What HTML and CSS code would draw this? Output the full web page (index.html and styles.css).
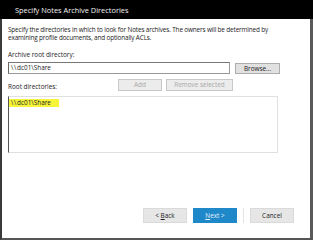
FILE: index.html
```html
<!DOCTYPE html>
<html>
<head>
<meta charset="utf-8">
<link rel="stylesheet" href="styles.css">
</head>
<body>
<div class="window">
  <div class="titlebar">Specify Notes Archive Directories</div>
  <div class="content">
    <p class="desc">Specify the directories in which to look for Notes archives. The owners will be determined by examining profile documents, and optionally ACLs.</p>
    <div class="label label-root">Archive root directory:</div>
    <div class="row">
      <div class="input"><span class="bs">&#92;&#92;</span>dc01&#92;Share</div>
      <div class="btn btn-browse">Browse...</div>
    </div>
    <div class="row row-mid">
      <div class="label">Root directories:</div>
      <div class="btn btn-dis btn-add">Add</div>
      <div class="btn btn-dis btn-remove">Remove selected</div>
    </div>
    <div class="listbox">
      <span class="item"><span class="bs">&#92;&#92;</span>dc01&#92;Share</span>
    </div>
    <div class="footer">
      <div class="btn btn-nav">&lt; <u>B</u>ack</div>
      <div class="btn btn-nav btn-next"><u>N</u>ext &gt;</div>
      <div class="sep"></div>
      <div class="btn btn-nav">Cancel</div>
    </div>
  </div>
</div>
</body>
</html>
```
FILE: styles.css
```css
html, body {
  margin: 0;
  padding: 0;
  background: #fff;
}
.window {
  width: 313px;
  height: 240px;
  box-sizing: border-box;
  border-left: 2px solid #3a3a3a;
  border-right: 3px solid #5a5a5a;
  border-bottom: 2px solid #555;
  display: flex;
  flex-direction: column;
  font-family: "Open Sans", "Noto Sans", sans-serif;
  font-size: 6.4px;
  color: #222;
}
.titlebar {
  height: 19px;
  background: #000;
  color: #f2f2f2;
  font-size: 7.4px;
  line-height: 19px;
  padding-left: 15px;
  margin-left: -2px;
  margin-right: -3px;
  padding-top: 1px;
  box-sizing: border-box;
}
.content {
  flex: 1;
  display: flex;
  flex-direction: column;
  padding: 7px 0 0 6px;
}
.desc {
  margin: 0;
  line-height: 8px;
  width: 272px;
  letter-spacing: -0.15px;
}
.label {
  line-height: 8px;
}
.label-root {
  margin-top: 9px;
}
.bs {
  letter-spacing: 0.7px;
}
.row {
  display: flex;
  align-items: center;
  margin-top: 3px;
}
.input {
  width: 222px;
  height: 12px;
  box-sizing: border-box;
  border: 1px solid #9a9a9a;
  border-left-color: #666;
  border-top-color: #777;
  padding-left: 2px;
  line-height: 10px;
}
.btn {
  box-sizing: border-box;
  border: 1px solid #adadad;
  background: #e1e1e1;
  text-align: center;
  line-height: 9px;
}
.btn-browse {
  width: 45px;
  height: 11px;
  margin-left: 5px;
  margin-top: 1px;
}
.row-mid {
  margin-top: 5px;
  align-items: flex-end;
}
.row-mid .label {
  width: 110px;
}
.btn-dis {
  color: #a8a8a8;
  background: #ececec;
  border-color: #c8c8c8;
  height: 12px;
  line-height: 10px;
}
.btn-add {
  width: 44px;
}
.btn-remove {
  width: 67px;
  margin-left: 4px;
}
.listbox {
  width: 270px;
  height: 57px;
  box-sizing: border-box;
  margin-top: 5px;
  border: 1px solid #e0e0e0;
  border-left: 1px solid #555;
  padding: 1px 0 0 0;
}
.item {
  display: inline-block;
  background: #f7f53a;
  padding: 0 8px 0 2px;
  line-height: 8px;
}
.footer {
  display: flex;
  align-items: center;
  margin-top: 55px;
  padding-left: 135px;
}
.btn-nav {
  width: 44px;
  height: 15px;
  line-height: 13px;
  border-color: #dadada;
  background: #e6e6e6;
  margin-right: 6px;
}
.btn-next {
  background: #1f88c9;
  border-color: #1f88c9;
  color: #e8f3fb;
}
.sep {
  width: 1px;
  height: 15px;
  background: #e4e4e4;
  margin-right: 6px;
}
```
